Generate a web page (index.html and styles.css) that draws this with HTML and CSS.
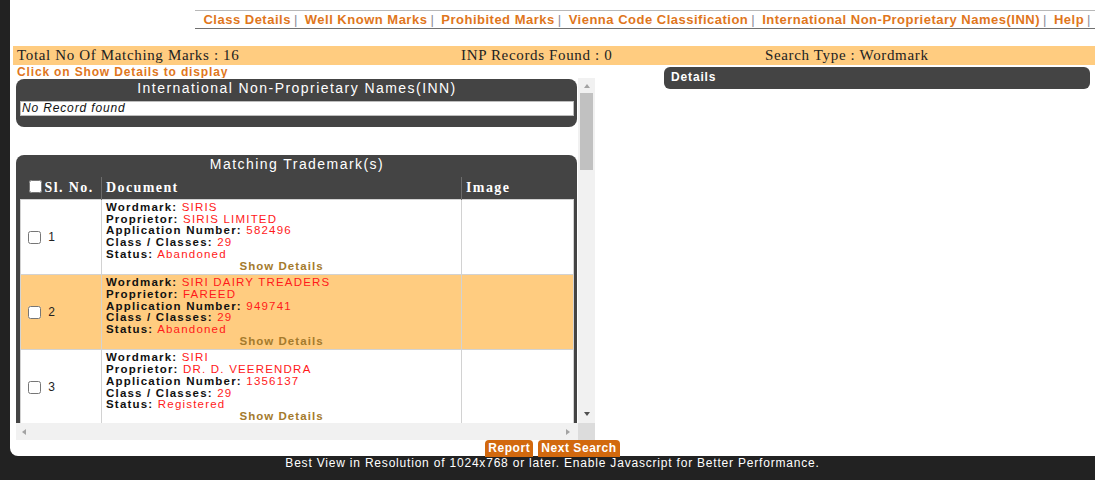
FILE: index.html
```html
<!DOCTYPE html>
<html lang="en">
<head>
<meta charset="utf-8">
<title>Trade Mark Public Search</title>
<link rel="stylesheet" href="styles.css">
</head>
<body>
<div class="shell">
  <div class="page">
    <nav class="toplinks">
      <a href="#">Class Details</a><span class="sep">|</span><a href="#">Well Known Marks</a><span class="sep">|</span><a href="#">Prohibited Marks</a><span class="sep">|</span><a href="#">Vienna Code Classification</a><span class="sep">|</span><a href="#">International Non-Proprietary Names(INN)</a><span class="sep">|</span><a href="#">Help</a><span class="sep">|</span>
    </nav>

    <div class="summary">
      <span>Total No Of Matching Marks : 16</span>
      <span>INP Records Found : 0</span>
      <span>Search Type : Wordmark</span>
    </div>

    <div class="main">
      <section class="results">
        <div class="hint">Click on Show Details to display</div>
        <div class="scroller">
          <div class="viewport">
            <div class="panel inn">
              <div class="panel-title">International Non-Proprietary Names(INN)</div>
              <div class="inn-body">No Record found</div>
            </div>

            <div class="panel marks">
              <div class="panel-title">Matching Trademark(s)</div>
              <table class="marks-table">
                <colgroup>
                  <col class="c-sl">
                  <col class="c-doc">
                  <col class="c-img">
                </colgroup>
                <thead>
                  <tr>
                    <th><input type="checkbox" class="chk-all">Sl. No.</th>
                    <th>Document</th>
                    <th>Image</th>
                  </tr>
                </thead>
                <tbody>
                  <tr>
                    <td class="sl"><input type="checkbox"> 1</td>
                    <td class="doc">
                      <b>Wordmark:</b> <span class="val">SIRIS</span><br>
                      <b>Proprietor:</b> <span class="val">SIRIS LIMITED</span><br>
                      <b>Application Number:</b> <span class="val">582496</span><br>
                      <b>Class / Classes:</b> <span class="val">29</span><br>
                      <b>Status:</b> <span class="val">Abandoned</span>
                      <a href="#" class="show">Show Details</a>
                    </td>
                    <td class="img"></td>
                  </tr>
                  <tr class="alt">
                    <td class="sl"><input type="checkbox"> 2</td>
                    <td class="doc">
                      <b>Wordmark:</b> <span class="val">SIRI DAIRY TREADERS</span><br>
                      <b>Proprietor:</b> <span class="val">FAREED</span><br>
                      <b>Application Number:</b> <span class="val">949741</span><br>
                      <b>Class / Classes:</b> <span class="val">29</span><br>
                      <b>Status:</b> <span class="val">Abandoned</span>
                      <a href="#" class="show">Show Details</a>
                    </td>
                    <td class="img"></td>
                  </tr>
                  <tr>
                    <td class="sl"><input type="checkbox"> 3</td>
                    <td class="doc">
                      <b>Wordmark:</b> <span class="val">SIRI</span><br>
                      <b>Proprietor:</b> <span class="val">DR. D. VEERENDRA</span><br>
                      <b>Application Number:</b> <span class="val">1356137</span><br>
                      <b>Class / Classes:</b> <span class="val">29</span><br>
                      <b>Status:</b> <span class="val">Registered</span>
                      <a href="#" class="show">Show Details</a>
                    </td>
                    <td class="img"></td>
                  </tr>
                </tbody>
              </table>
            </div>
          </div>

          <div class="vbar">
            <span class="arrow up"></span>
            <span class="thumb"></span>
            <span class="arrow down"></span>
          </div>
          <div class="hbar">
            <span class="arrow left"></span>
            <span class="arrow right"></span>
          </div>
          <div class="corner"></div>
        </div>
      </section>

      <aside class="details">
        <div class="details-head">Details</div>
      </aside>
    </div>

    <div class="actions">
      <button type="button" class="btn">Report</button>
      <button type="button" class="btn">Next Search</button>
    </div>
  </div>

  <footer class="foot">Best View in Resolution of 1024x768 or later. Enable Javascript for Better Performance.</footer>
</div>
</body>
</html>
```

FILE: styles.css
```css
* {
  box-sizing: border-box;
}

html,
body {
  margin: 0;
  height: 100%;
}

body {
  background: #222;
  font-family: "Liberation Sans", Arial, sans-serif;
  font-size: 12px;
  letter-spacing: 0.85px;
  color: #111;
  overflow: hidden;
}

a {
  text-decoration: none;
}

.shell {
  padding-left: 10px;
}

/* white sheet holding the search results */
.page {
  background: #fff;
  height: 456px;
  border-bottom-left-radius: 8px;
  display: flex;
  flex-direction: column;
}

/* top link strip */
.toplinks {
  margin: 10px 0 0 185px;
  height: 19px;
  border-top: 1px solid #b8b8b8;
  border-bottom: 1px solid #707070;
  padding-right: 4px;
  text-align: right;
  white-space: nowrap;
  font-size: 13px;
  letter-spacing: 0.5px;
  font-weight: bold;
  line-height: 18px;
}

.toplinks a {
  color: #e0761c;
}

.toplinks .sep {
  color: #8c8c98;
  font-weight: normal;
  margin: 0 7px 0 3px;
}

.toplinks .sep:last-child {
  margin-right: 0;
}

/* totals bar */
.summary {
  margin: 17px 0 0 3px;
  height: 19px;
  background: #ffcc80;
  padding-left: 4px;
  display: grid;
  grid-template-columns: 444px 304px auto;
  font-family: "Liberation Serif", "Times New Roman", serif;
  font-size: 15px;
  letter-spacing: 0.65px;
  line-height: 19px;
  color: #222;
}

.main {
  display: flex;
  margin-left: 6px;
}

.results {
  width: 579px;
}

.hint {
  margin-left: 1px;
  height: 13px;
  line-height: 15px;
  font-weight: bold;
  color: #e0761c;
}

/* scroll box with drawn scrollbars */
.scroller {
  display: grid;
  grid-template-columns: 562px 17px;
  grid-template-rows: 345px 17px;
}

.viewport {
  overflow: hidden;
  background: #fff;
}

.panel {
  background: #444;
  margin-right: 1px;
  padding: 0 3px 0 4px;
}

.panel-title {
  color: #fff;
  text-align: center;
  font-size: 14px;
  letter-spacing: 1.45px;
  line-height: 16px;
  padding: 1px 0 5px;
}

.inn {
  margin-top: 1px;
  border-radius: 8px;
  padding-bottom: 11px;
}

.inn-body {
  background: #fff;
  border: 1px solid #bdbdbd;
  height: 15px;
  line-height: 13px;
  padding-left: 1px;
  font-style: italic;
  color: #111;
}

.marks {
  margin-top: 28px;
  border-radius: 8px 8px 0 0;
}

.marks-table {
  width: 100%;
  border-collapse: collapse;
  table-layout: fixed;
}

.c-sl {
  width: 81px;
}

.c-doc {
  width: 360px;
}

.marks-table th {
  color: #fff;
  text-align: left;
  font-family: "Liberation Serif", "Times New Roman", serif;
  font-size: 14px;
  letter-spacing: 1.4px;
  line-height: 16px;
  padding: 3px 4px;
  border-left: 1px solid #6c6c6c;
  white-space: nowrap;
}

.marks-table th:first-child {
  border-left: 0;
}

.chk-all {
  margin: 0 3px 0 4px;
  vertical-align: -1px;
}

.marks-table td {
  background: #fff;
  border: 1px solid #d2d2d2;
  padding: 2px 4px;
  vertical-align: top;
}

.marks-table tr.alt td {
  background: #ffcc80;
}

.marks-table td.sl {
  vertical-align: middle;
  padding-left: 3px;
  color: #222;
}

.marks-table td.sl input {
  vertical-align: middle;
}

.doc {
  font-size: 11.5px;
  line-height: 11.7px;
  letter-spacing: 1.2px;
  padding-top: 3px;
}

.doc b {
  color: #111;
}

.doc .val {
  color: #ff1a1a;
}

.doc .show {
  display: block;
  text-align: center;
  font-weight: bold;
  color: #a47a2c;
  letter-spacing: 1.05px;
}

.vbar {
  background: #f1f1f1;
  display: flex;
  flex-direction: column;
  align-items: center;
}

.vbar .up {
  margin: 6px 0 5px;
}

.thumb {
  width: 13px;
  height: 77px;
  background: #c1c1c1;
}

.vbar .down {
  margin: auto 0 7px;
}

.hbar {
  background: #f1f1f1;
  display: flex;
  align-items: center;
  justify-content: space-between;
  padding: 0 8px 0 6px;
}

.corner {
  background: #dcdcdc;
}

.arrow {
  display: block;
  width: 0;
  height: 0;
  border: 0 solid transparent;
}

.arrow.up {
  border-width: 0 3.5px 4px;
  border-bottom-color: #a3a3a3;
}

.arrow.down {
  border-width: 4px 3.5px 0;
  border-top-color: #505050;
}

.arrow.left {
  border-width: 3.5px 4px 3.5px 0;
  border-right-color: #a3a3a3;
}

.arrow.right {
  border-width: 3.5px 0 3.5px 4px;
  border-left-color: #a3a3a3;
}

/* right-hand detail pane */
.details {
  flex: 1;
  margin: 2px 5px 0 69px;
}

.details-head {
  height: 22px;
  background: #444;
  border-radius: 6px;
  padding: 3px 7px;
  line-height: 14px;
  color: #fff;
  font-weight: bold;
}

.actions {
  display: flex;
  justify-content: center;
  gap: 5px;
  margin-top: auto;
}

.btn {
  height: 17px;
  padding: 0 3px;
  border: 0;
  border-radius: 4px 4px 0 0;
  background: #d2690e;
  color: #fff;
  font-family: "Liberation Sans", Arial, sans-serif;
  font-size: 12px;
  font-weight: bold;
  letter-spacing: 0.55px;
  line-height: 17px;
}

.foot {
  height: 24px;
  line-height: 14px;
  text-align: center;
  color: #fff;
  letter-spacing: 0.8px;
}
```
